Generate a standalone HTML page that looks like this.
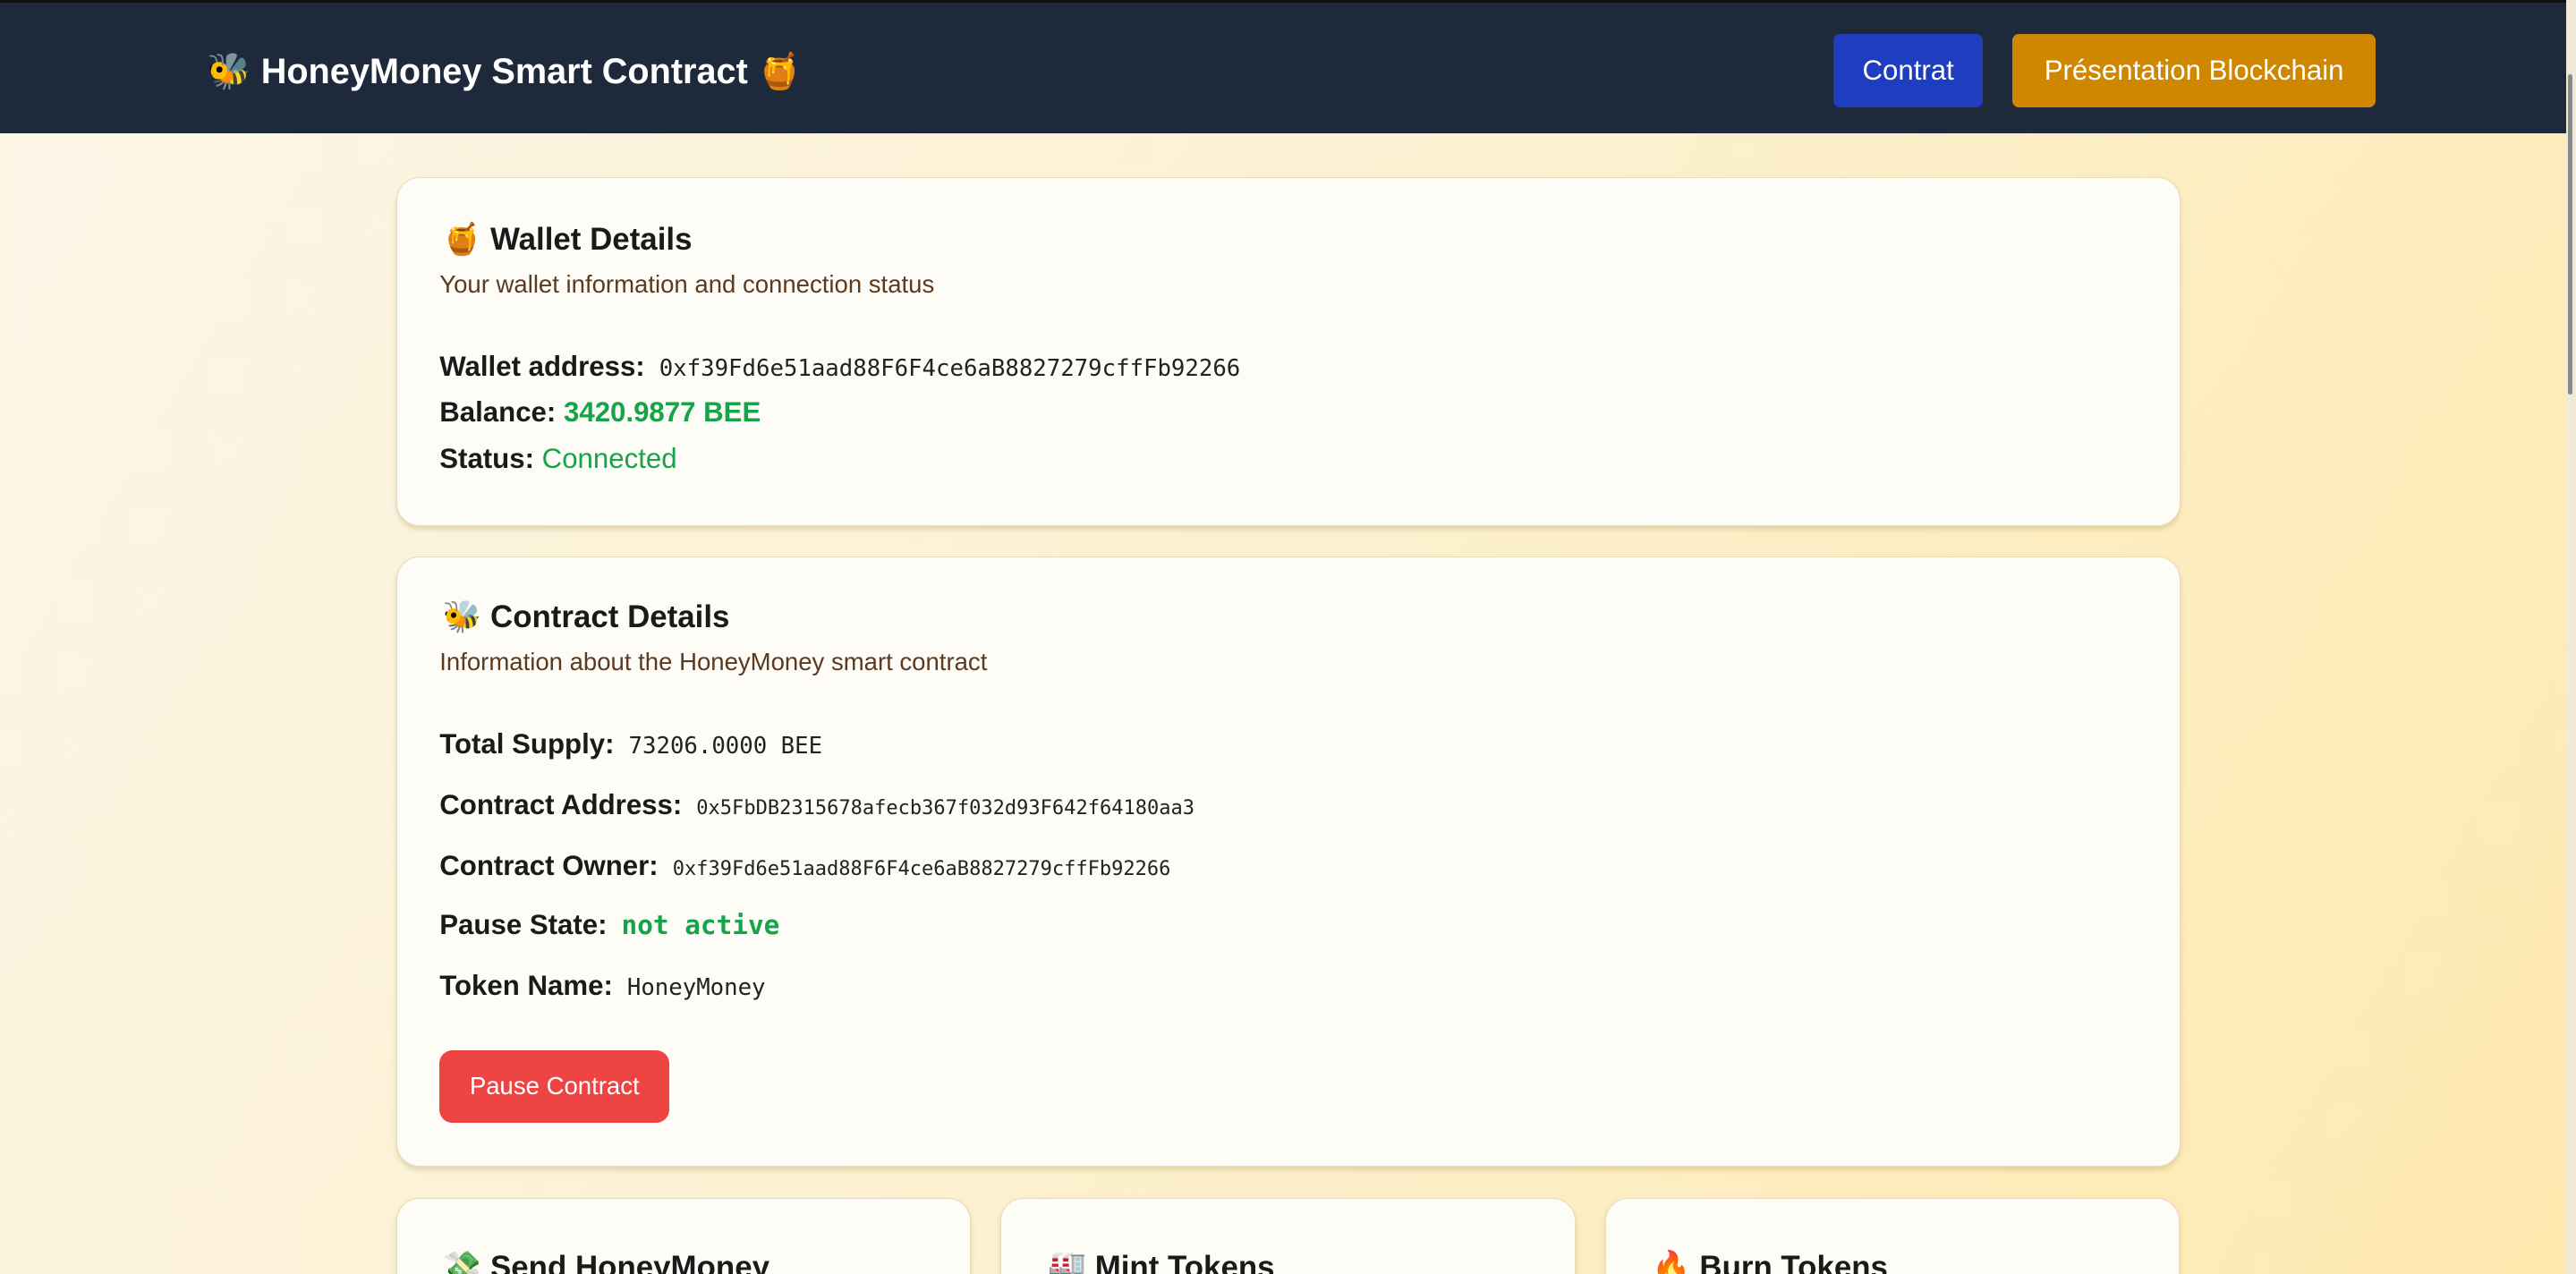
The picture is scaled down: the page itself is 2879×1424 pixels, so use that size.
<!DOCTYPE html>
<html><head><meta charset="utf-8"><style>
*{box-sizing:border-box;margin:0;padding:0}
html,body{width:2879px;height:1424px;overflow:hidden}
body{background:linear-gradient(120deg,#fbf6e8 0%,#fcf0cf 50%,#fee9ae 100%);font-family:"Liberation Sans",sans-serif}
#w{zoom:1.8361;width:1568px;height:776px;position:relative}
.hdr{position:absolute;left:0;top:0;width:1568px;height:81px;background:#1e293b;border-top:2px solid #111}
.ttl{position:absolute;left:126px;top:29px;color:#fff;font-weight:bold;font-size:21.6px}
.btn{position:absolute;top:19px;height:45px;line-height:45px;color:#fff;font-size:17px;border-radius:4px;text-align:center}
.sb{position:absolute;left:1562px;top:0;width:6px;height:776px;background:#f1ead6}
.sb i{position:absolute;left:1px;top:45px;width:3px;height:195px;background:#888;border-radius:2px}
.card{position:absolute;background:#fdfcf7;border:1px solid #e6dcbc;border-radius:14px;box-shadow:0 2px 3px rgba(180,160,100,.35)}
.h{position:absolute;left:28px;font-size:19px;font-weight:bold;color:#1a1a1a}
.s{position:absolute;left:26px;font-size:15px;color:#5c3a1e}
.l{position:absolute;left:26px;font-size:17px;font-weight:bold;color:#1a1a1a;white-space:nowrap}
.m{font-family:"DejaVu Sans Mono","Liberation Mono",monospace;font-weight:normal;color:#222;margin-left:4px}
.g{color:#16a34a}
</style></head><body><div id="w">
<div class="hdr"><div class="ttl">🐝 HoneyMoney Smart Contract 🍯</div>
<div class="btn" style="left:1116px;width:91px;background:#1e3ebf">Contrat</div>
<div class="btn" style="left:1225px;width:221px;background:#d08700">Présentation Blockchain</div></div>
<div class="sb"><i></i></div>
<div class="card" style="left:241px;top:108px;width:1086px;height:212px">
<div class="h" style="top:26px">🍯 Wallet Details</div>
<div class="s" style="top:56px">Your wallet information and connection status</div>
<div class="l" style="top:105px">Wallet address: <span class="m" style="font-size:14px">0xf39Fd6e51aad88F6F4ce6aB8827279cffFb92266</span></div>
<div class="l" style="top:133px">Balance: <span class="g">3420.9877 BEE</span></div>
<div class="l" style="top:161px">Status: <span class="g" style="font-weight:normal">Connected</span></div>
</div>
<div class="card" style="left:241px;top:339px;width:1086px;height:371px">
<div class="h" style="top:25px">🐝 Contract Details</div>
<div class="s" style="top:55px">Information about the HoneyMoney smart contract</div>
<div class="l" style="top:104px">Total Supply: <span class="m" style="font-size:14px">73206.0000 BEE</span></div>
<div class="l" style="top:141px">Contract Address: <span class="m" style="font-size:12px">0x5FbDB2315678afecb367f032d93F642f64180aa3</span></div>
<div class="l" style="top:178px">Contract Owner: <span class="m" style="font-size:12px">0xf39Fd6e51aad88F6F4ce6aB8827279cffFb92266</span></div>
<div class="l" style="top:214px">Pause State: <span class="m g" style="font-size:16px;font-weight:bold;color:#16a34a">not active</span></div>
<div class="l" style="top:251px">Token Name: <span class="m" style="font-size:14px">HoneyMoney</span></div>
<div style="position:absolute;left:26px;top:300px;width:140px;height:44px;background:#ef4444;border-radius:8px;color:#fff;font-size:15px;line-height:44px;text-align:center">Pause Contract</div>
</div>
<div class="card" style="left:241px;top:729px;width:350px;height:80px"><div class="h" style="top:31px">💸 Send HoneyMoney</div></div>
<div class="card" style="left:609px;top:729px;width:350px;height:80px"><div class="h" style="top:31px">🏭 Mint Tokens</div></div>
<div class="card" style="left:977px;top:729px;width:350px;height:80px"><div class="h" style="top:31px">🔥 Burn Tokens</div></div>
</div></body></html>
